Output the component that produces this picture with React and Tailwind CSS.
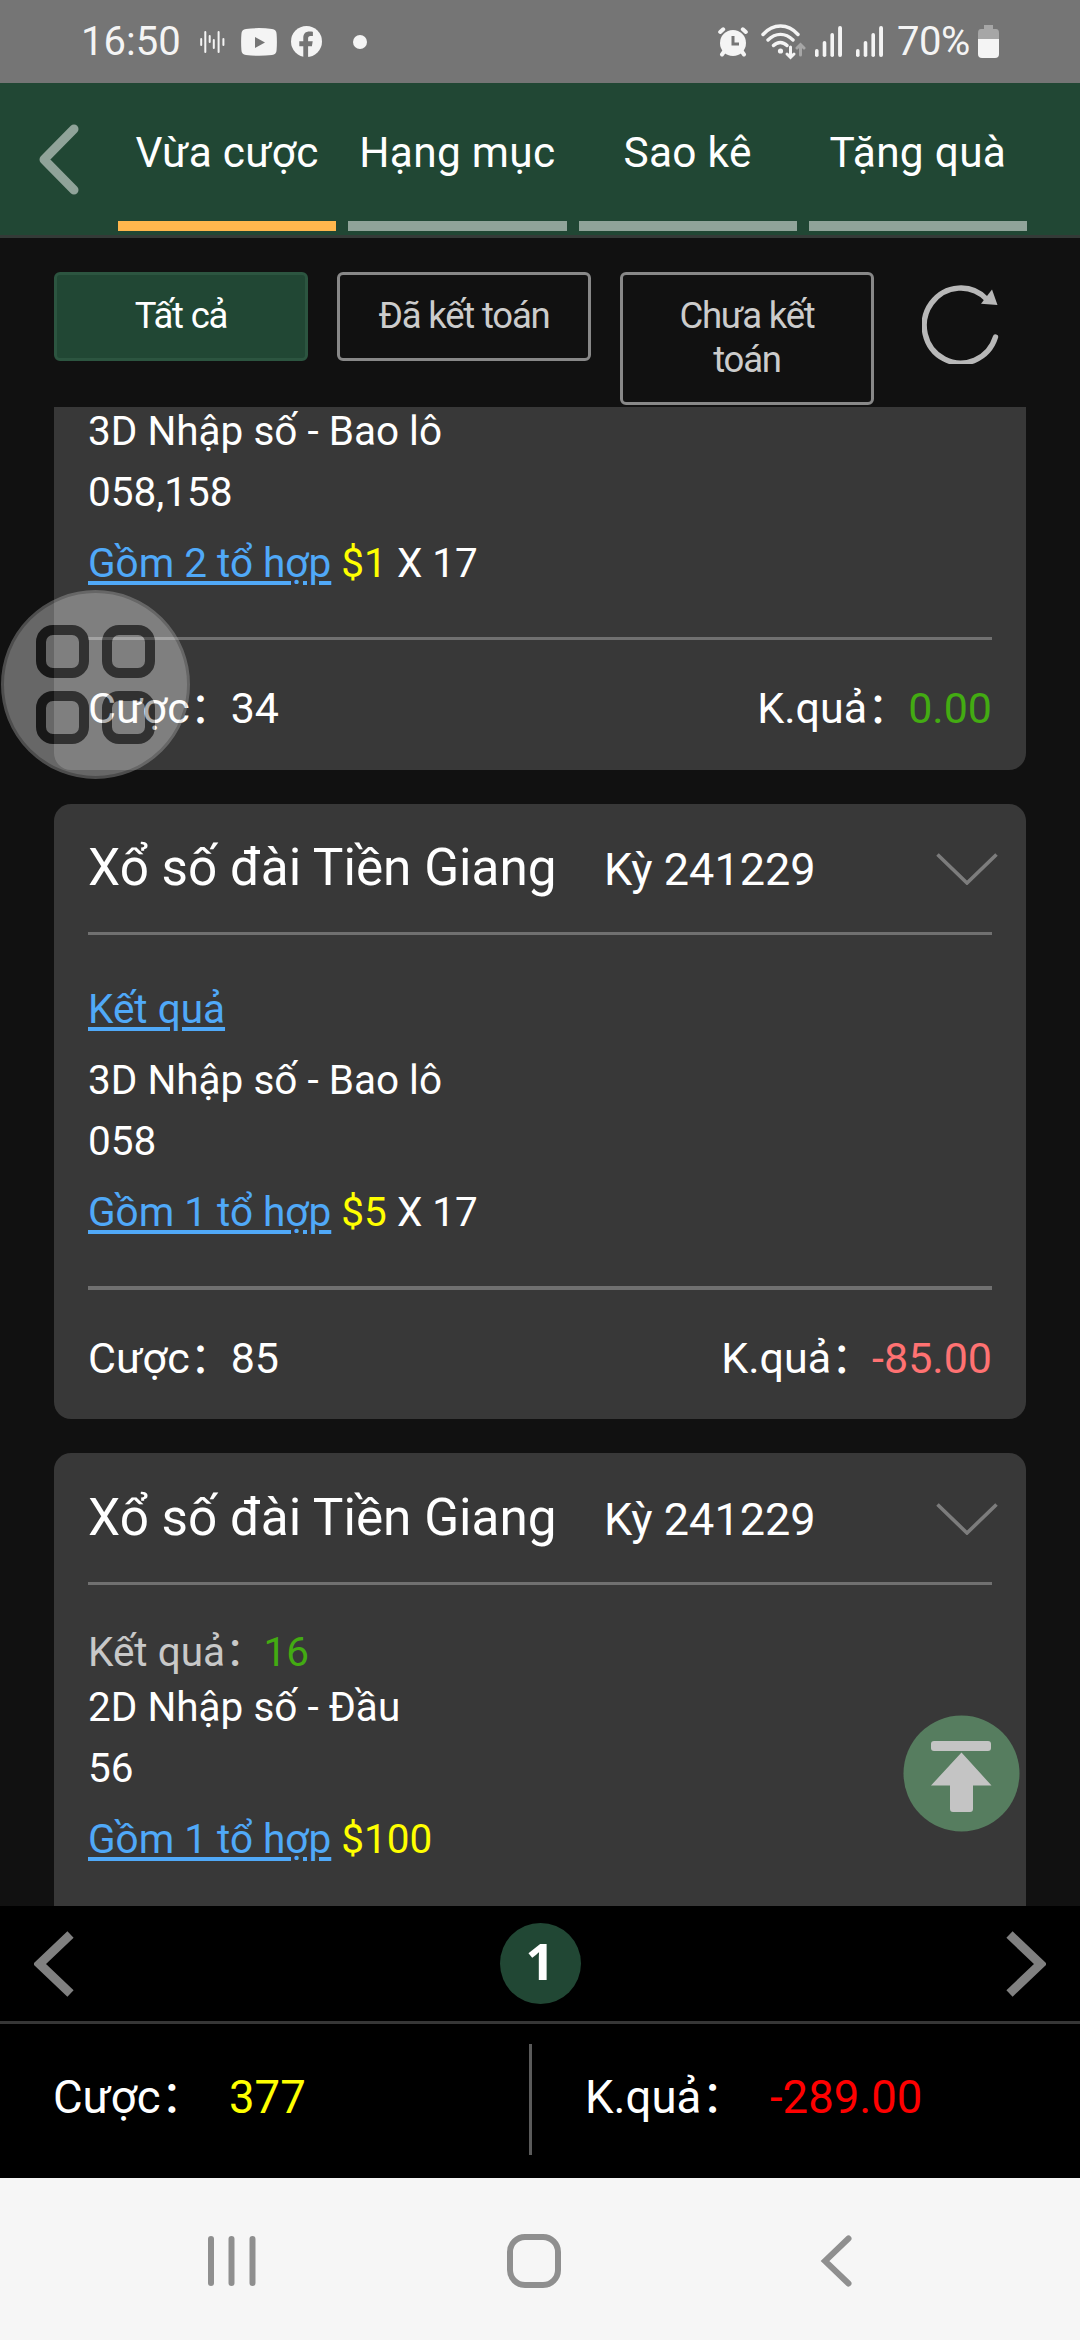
const TABS = ["Vừa cược", "Hạng mục", "Sao kê", "Tặng quà"];

const FILTERS = [
  { label: "Tất cả", active: true },
  { label: "Đã kết toán" },
  { label: "Chưa kết toán" },
];

const TICKETS = [
  {
    id: 2,
    title: "Xổ số đài Tiền Giang",
    period: "Kỳ 241229",
    game: "3D Nhập số - Bao lô",
    numbers: "058",
    combo: "Gồm 1 tổ hợp",
    price: "$5",
    times: "X 17",
    stake: "85",
    result: "-85.00",
  },
  {
    id: 3,
    title: "Xổ số đài Tiền Giang",
    period: "Kỳ 241229",
    draw: "16",
    game: "2D Nhập số - Đầu",
    numbers: "56",
    combo: "Gồm 1 tổ hợp",
    price: "$100",
  },
];

function SignalIcon() {
  return (
    <svg width="27" height="31" viewBox="0 0 27 31" fill="#f4f4f4">
      <rect x="0" y="23" width="3.6" height="8" rx="1.8" />
      <rect x="7.7" y="15" width="3.6" height="16" rx="1.8" />
      <rect x="15.4" y="7" width="3.6" height="24" rx="1.8" />
      <rect x="23.1" y="0" width="3.9" height="31" rx="1.9" />
    </svg>
  );
}

function StatusBar() {
  return (
    <div className="flex h-[83px] shrink-0 items-center bg-[#757575] pr-[81px] pl-[81px] text-[40px] leading-none text-[#f4f4f4]">
      <span className="w-[100px]">16:50</span>
      <svg className="ml-[19px]" width="25" height="24" viewBox="0 0 25 24" stroke="#f4f4f4" strokeWidth="2" strokeLinecap="round">
        <path d="M1.2 9v6M5.3 2v20M9.7 6v6M13.8 10v8M18.6 2v20M23.4 9v6" />
      </svg>
      <svg className="ml-[16px]" width="36" height="28" viewBox="0 0 36 28">
        <path d="M5 1Q18-.8 31 1Q35.500 1.600 35.600 6Q36.200 14 35.600 22Q35.500 26.400 31 27Q18 28.600 5 27Q.5 26.400.4 22Q-.2 14 .4 6Q.5 1.600 5 1Z" fill="#f4f4f4" />
        <path d="M14 9v11l10-5.500z" fill="#757575" />
      </svg>
      <svg className="ml-[14px]" width="31" height="31" viewBox="0 0 31 31">
        <circle cx="15.500" cy="15.500" r="15.500" fill="#f4f4f4" />
        <path d="M12.300 31V20.200H8.300v-5h4v-3.600c0-4.200 2.400-6.200 6.200-6.200 1.400 0 2.700.2 3.400.3v4.300h-2.300c-1.900 0-2.500 1-2.500 2.300v2.900h4.600l-.8 5h-3.800V31z" fill="#757575" />
      </svg>
      <span className="ml-[31px] size-[14px] rounded-full bg-[#f4f4f4]" />

      <div className="ml-auto flex items-center">
        <svg width="30" height="30" viewBox="0 0 30 30">
          <g stroke="#f4f4f4" strokeWidth="4" strokeLinecap="round">
            <path d="M2.200 5l3-2.700M27.800 5l-3-2.700M6.500 24L4 27.500M23.500 24l2.500 3.500" />
          </g>
          <circle cx="15" cy="16" r="13" fill="#f4f4f4" />
          <path d="M15 9v8h6" fill="none" stroke="#757575" strokeWidth="3" />
        </svg>
        <svg className="ml-[13px]" width="45" height="36" viewBox="0 0 45 36" fill="none" strokeLinecap="round">
          <g stroke="#f4f4f4" strokeWidth="3.400">
            <path d="M2 10.500C12-.8 27-.8 37 10.500M7 16c7.500-7.500 17.500-7.500 25 0M12.500 21.500c4-4 9.500-4 13.500 0" />
          </g>
          <circle cx="19.500" cy="27" r="2.600" fill="#f4f4f4" />
          <path d="M29.500 23v10M26 30l3.500 3.500L33 30" stroke="#f4f4f4" strokeWidth="3" />
          <path d="M39.500 31V21M36 24l3.500-3.500L43 24" stroke="#a6a6a6" strokeWidth="3" />
        </svg>
        <span className="ml-[9px]"><SignalIcon /></span>
        <span className="ml-[14px]"><SignalIcon /></span>
        <span className="ml-[14px] w-[77px] tracking-[-0.5px]">70%</span>
        <svg className="ml-[4px]" width="21" height="33" viewBox="0 0 21 33">
          <path d="M6 0h9v4h3q3 0 3 4v7H0V8q0-4 3-4h3z" fill="#a6a6a6" />
          <path d="M0 14h21v15q0 4-4 4H4q-4 0-4-4z" fill="#f4f4f4" />
        </svg>
      </div>
    </div>
  );
}

function Header() {
  return (
    <div className="flex h-[155px] shrink-0 border-b-3 border-[#343a37] bg-[#214734] pr-[53px]">
      <svg className="mt-[41px] ml-[39px] shrink-0" width="40" height="72" viewBox="0 0 40 72" fill="none">
        <path d="M35 5L5 35.500L35 66" stroke="#90a399" strokeWidth="9" strokeLinecap="round" strokeLinejoin="round" />
      </svg>
      <div className="ml-[39px] flex flex-1 gap-[12px]">
        {TABS.map((tab, i) => (
          <div key={tab} className="flex flex-1 flex-col items-center">
            <span className="mt-[45px] h-[93px] text-[42.4px] leading-[50px] tracking-[0.3px] whitespace-nowrap text-white">{tab}</span>
            <span className={i === 0 ? "h-[10px] w-full bg-[#ffb74d]" : "h-[10px] w-full bg-[#90a399]"} />
          </div>
        ))}
      </div>
    </div>
  );
}

function Filters() {
  return (
    <div className="flex h-[169px] shrink-0 items-start gap-[29px] pt-[34px] pl-[54px]">
      {FILTERS.map((f) => (
        <button
          key={f.label}
          className={
            f.active
              ? "w-[254px] rounded-[6px] border-3 border-[#2c5540] bg-[#214734] px-[36px] pt-[19px] pb-[20px] text-[36.5px] leading-[44px] tracking-[-1.2px] text-white"
              : "w-[254px] rounded-[6px] border-3 border-[#888] px-[36px] pt-[19px] pb-[20px] text-[36.5px] leading-[44px] tracking-[-1.2px] text-[#ccc]"
          }
        >
          {f.label}
        </button>
      ))}
      <svg className="mt-[13px] ml-[19px]" width="77" height="79" viewBox="0 0 77 79" fill="none">
        <path d="M73.500 52A36.500 37.500 0 1 1 65 14.500" stroke="#b8b8b8" strokeWidth="5.400" strokeLinecap="round" />
        <path d="M70 4.500L75.500 20L59 18.800z" fill="#b8b8b8" />
      </svg>
    </div>
  );
}

// full-width colon, kept out of the line height
function Colon() {
  return <span className="mr-[-2px] font-['Noto_Sans_CJK_SC',sans-serif] leading-none">：</span>;
}

function Combo({ combo, price, times }) {
  return (
    <div className="mt-[10.5px] text-[40.5px] leading-[60.5px]">
      <a className="text-[#50a9f8] underline decoration-4 underline-offset-4">{combo}</a>{" "}
      <span className="text-[#ffff00]">{price}</span> {times}
    </div>
  );
}

function Totals({ stake, result }) {
  return (
    <div className="flex justify-between text-[43px] leading-[60px]">
      <div>
        Cược<Colon />{stake}
      </div>
      <div>
        K.quả<Colon />
        <span className={result.startsWith("-") ? "text-[#ff7272]" : "text-[#43ab12]"}>{result}</span>
      </div>
    </div>
  );
}

function Ticket({ ticket }) {
  return (
    <div className="shrink-0 rounded-[17px] bg-[#383838] px-[34px]">
      <div
        className={
          ticket.draw
            ? "flex h-[132px] items-baseline border-b-3 border-[#707070] pt-[33px]"
            : "flex h-[131px] items-baseline border-b-3 border-[#707070] pt-[32px]"
        }
      >
        <span className="w-[516px] text-[51.3px] leading-[64px] whitespace-nowrap">{ticket.title}</span>
        <span className="text-[45px] leading-[64px]">{ticket.period}</span>
        <svg className="mr-[-6px] mb-[-3px] ml-auto" width="62" height="32" viewBox="0 0 62 32" fill="none">
          <path d="M1.500 1.500L31 30L60.500 1.500" stroke="#7c7c7c" strokeWidth="3.600" />
        </svg>
      </div>
      {ticket.draw ? (
        <div className="-mb-[5px] pt-[37px] text-[40.5px] leading-[60.5px] text-[#c8c8c8]">
          Kết quả<Colon /><span className="text-[#43ab12]">{ticket.draw}</span>
        </div>
      ) : (
        <div className="pt-[43.5px] pb-[11px] text-[40.5px] leading-[60.5px]">
          <a className="text-[#50a9f8] underline decoration-4 underline-offset-4">Kết quả</a>
        </div>
      )}
      <div className="text-[40.5px] leading-[60.5px]">{ticket.game}</div>
      <div className="text-[40.5px] leading-[60.5px]">{ticket.numbers}</div>
      <Combo {...ticket} />
      {ticket.stake ? (
        <div className="mt-[43.5px] h-[133px] border-t-4 border-[#707070] pt-[38px]">
          <Totals stake={ticket.stake} result={ticket.result} />
        </div>
      ) : (
        <div className="h-[80px]" />
      )}
    </div>
  );
}

function AssistiveButton() {
  return (
    <svg className="absolute top-[590px] left-px" width="189" height="189" viewBox="0 0 189 189" opacity="0.37">
      <circle cx="94.500" cy="94.500" r="93" fill="#fafafa" stroke="#b5b5b5" strokeWidth="3" />
      <g fill="none" stroke="#262626" strokeWidth="10">
        <rect x="40" y="40" width="43" height="43" rx="12" />
        <rect x="106" y="40" width="43" height="43" rx="12" />
        <rect x="40" y="106" width="43" height="43" rx="12" />
        <rect x="106" y="106" width="43" height="43" rx="12" />
      </g>
    </svg>
  );
}

function BackToTop() {
  return (
    <svg className="absolute top-[1715px] left-[903px]" width="117" height="117" viewBox="0 0 117 117">
      <circle cx="58.500" cy="58.500" r="58" fill="#567d5f" />
      <g fill="#c4c4c4">
        <rect x="28" y="26" width="60" height="10" rx="3" />
        <path d="M58.500 37.500L88.500 70.500H70V94q0 3-3 3H50q-3 0-3-3V70.500H28z" />
      </g>
    </svg>
  );
}

function Pager() {
  return (
    <div className="flex h-[118px] shrink-0 items-center justify-between border-b-3 border-[#363636] bg-black px-[34px]">
      <svg width="41" height="68" viewBox="0 0 41 68" fill="none">
        <path d="M36.500 4.500L5.500 34L36.500 63.500" stroke="#808080" strokeWidth="9" />
      </svg>
      <span className="flex size-[81px] items-center justify-center rounded-full bg-[#214734] pb-[6px] font-['Noto_Sans',sans-serif] text-[51px] leading-none font-bold">1</span>
      <svg width="41" height="68" viewBox="0 0 41 68" fill="none">
        <path d="M4.500 4.500L35.500 34L4.500 63.500" stroke="#808080" strokeWidth="9" />
      </svg>
    </div>
  );
}

function Summary() {
  return (
    <div className="flex h-[154px] shrink-0 bg-black pt-[20px] text-[45.5px] leading-[60px]">
      <div className="flex h-[111px] w-[532px] border-r-3 border-[#5a5a5a] pt-[24px] pl-[53px]">
        <span className="w-[176px]">Cược<Colon /></span>
        <span className="text-[#ffff00]">377</span>
      </div>
      <div className="flex pt-[24px] pl-[53px]">
        <span className="w-[185px]">K.quả<Colon /></span>
        <span className="text-[#ff0000]">-289.00</span>
      </div>
    </div>
  );
}

function NavBar() {
  return (
    <div className="flex h-[162px] shrink-0 bg-[#f6f6f6] pt-[55px] pl-[207px]">
      <svg width="50" height="56" viewBox="0 0 50 56" fill="#8f8f8f">
        <rect x="1" y="3" width="6" height="50" rx="3" />
        <rect x="21.500" y="3" width="6" height="50" rx="3" />
        <rect x="42.500" y="3" width="6" height="50" rx="3" />
      </svg>
      <svg className="ml-[249px]" width="56" height="56" viewBox="0 0 56 56" fill="none">
        <rect x="4" y="4" width="48" height="48" rx="15" stroke="#8f8f8f" strokeWidth="6" />
      </svg>
      <svg className="ml-[258px]" width="34" height="56" viewBox="0 0 34 56" fill="none">
        <path d="M28.500 5.500L5 28L28.500 50.500" stroke="#8f8f8f" strokeWidth="6" strokeLinecap="round" />
      </svg>
    </div>
  );
}

export default function App() {
  return (
    <div className="relative flex h-[2340px] w-[1080px] flex-col overflow-hidden bg-[#111] font-[Roboto,'Noto_Sans_CJK_SC',sans-serif] text-white">
      <StatusBar />
      <Header />
      <Filters />
      <div className="flex h-[1499px] shrink-0 flex-col gap-[34px] overflow-hidden px-[54px]">
        {/* first ticket, scrolled half way under the filters */}
        <div className="h-[363px] shrink-0 rounded-b-[17px] bg-[#383838] px-[34px]">
          <div className="-mt-[6px] text-[40.5px] leading-[60.5px]">3D Nhập số - Bao lô</div>
          <div className="text-[40.5px] leading-[60.5px]">058,158</div>
          <Combo combo="Gồm 2 tổ hợp" price="$1" times="X 17" />
          <div className="mt-[44px] border-t-3 border-[#707070] pt-[38px]">
            <Totals stake="34" result="0.00" />
          </div>
        </div>
        {TICKETS.map((t) => (
          <Ticket key={t.id} ticket={t} />
        ))}
      </div>
      <Pager />
      <Summary />
      <NavBar />
      <AssistiveButton />
      <BackToTop />
    </div>
  );
}
